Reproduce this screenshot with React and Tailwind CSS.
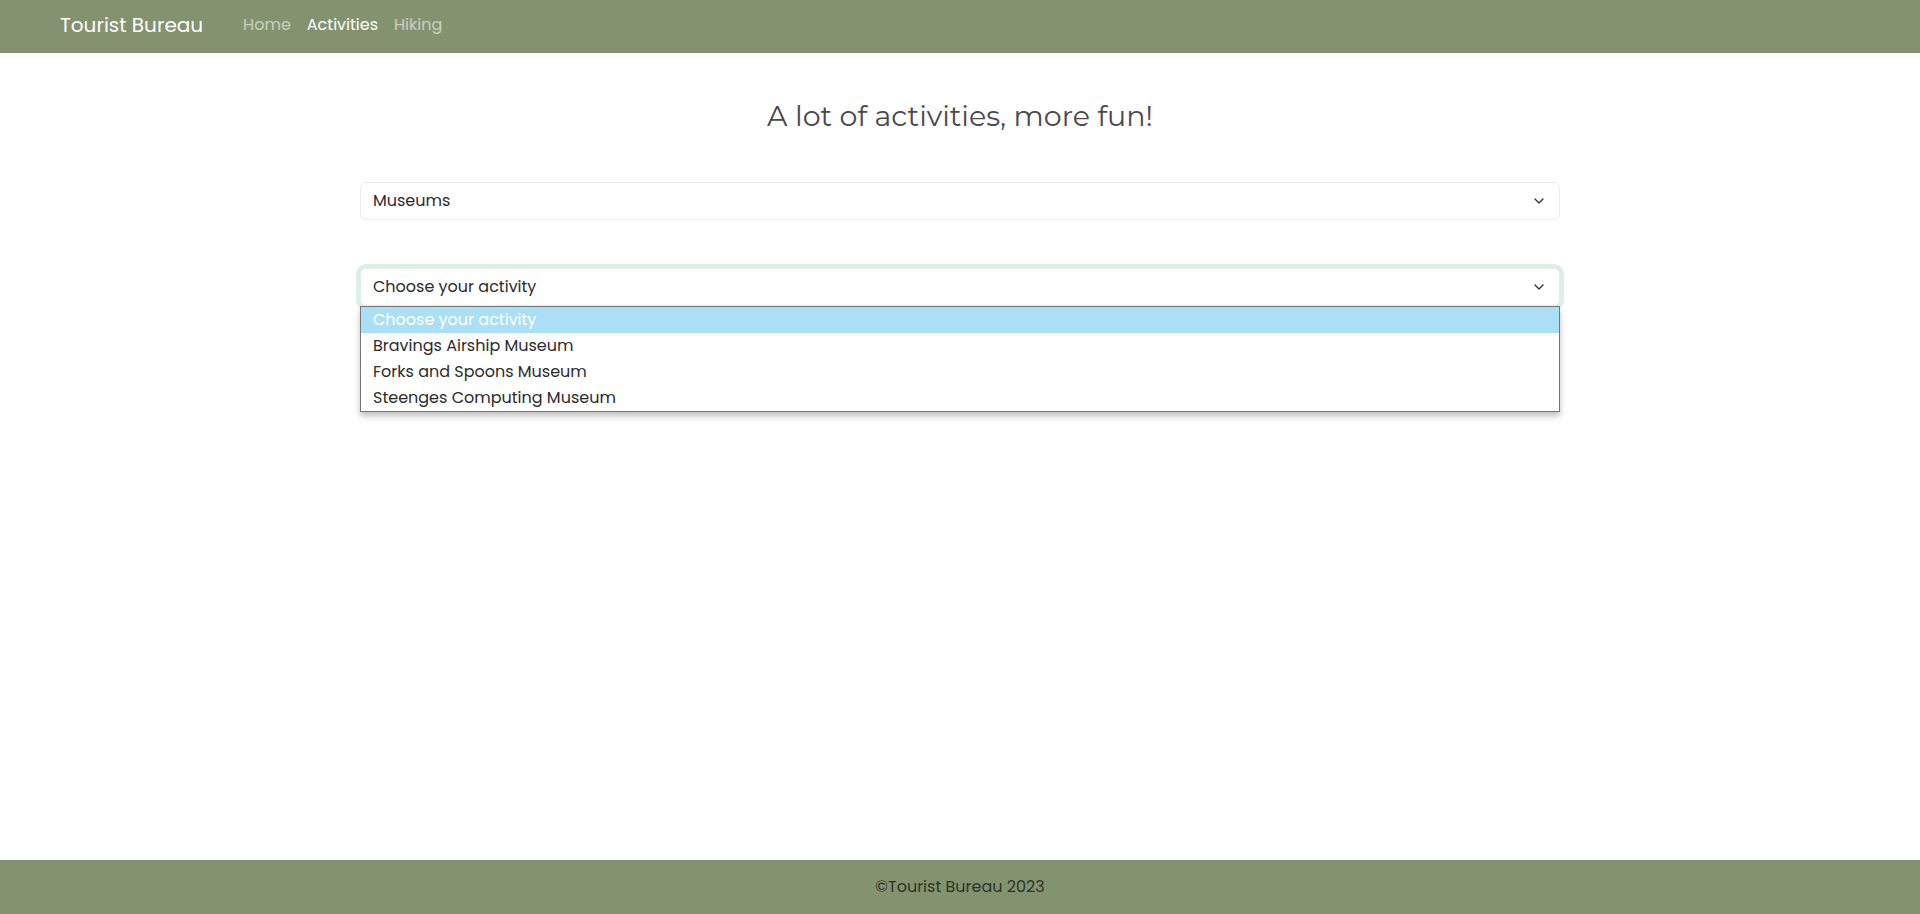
import { ChevronDown } from "lucide-react";

const options = [
  "Choose your activity",
  "Bravings Airship Museum",
  "Forks and Spoons Museum",
  "Steenges Computing Museum",
];

const SelectBox = ({ label, focused }) => (
  <div
    className={`flex h-[38px] items-center justify-between rounded-[6px] border bg-white pl-3 pr-3 text-[16px] text-[#2b2b2b] ${
      focused
        ? "border-[#e3efe9] shadow-[0_0_0_4px_#dcefe7]"
        : "border-[#ececec]"
    }`}
  >
    <span>{label}</span>
    <ChevronDown size={16} strokeWidth={2} className="text-[#333]" />
  </div>
);

export default function App() {
  return (
    <div className="flex min-h-[914px] flex-col bg-white font-['Poppins','Open_Sans',sans-serif] text-[#2b2b2b]">
      {/* navbar */}
      <nav className="flex h-[53px] items-center bg-[#84936f] px-[60px] pb-[3px]">
        <span className="mr-10 text-[20px] text-white">Tourist Bureau</span>
        <div className="flex gap-[16px] text-[16px]">
          <span className="text-white/55">Home</span>
          <span className="text-white">Activities</span>
          <span className="text-white/55">Hiking</span>
        </div>
      </nav>

      <main className="flex-1">
        <div className="mx-auto w-[1200px]">
          <h1 className="mt-[42px] text-center font-['Montserrat','Lato',sans-serif] text-[28.5px] text-[#4a4a4a]">
            A lot of activities, more fun!
          </h1>

          <div className="mt-[44px]">
            <SelectBox label="Museums" />
          </div>

          <div className="relative mt-[48px]">
            <SelectBox label="Choose your activity" focused />
            <div className="absolute left-0 right-0 top-[38px] border border-[#767676] bg-white shadow-[0_4px_6px_rgba(0,0,0,0.25)]">
              {options.map((o, i) => (
                <div
                  key={o}
                  className={`flex h-[26px] items-center px-3 text-[16px] ${
                    i === 0 ? "bg-[#abdff5] text-white" : "text-[#2b2b2b]"
                  }`}
                >
                  {o}
                </div>
              ))}
            </div>
          </div>
        </div>
      </main>

      <footer className="flex h-[54px] items-center justify-center bg-[#84936f] text-[16px] text-[#2e3328]">
        ©Tourist Bureau 2023
      </footer>
    </div>
  );
}
